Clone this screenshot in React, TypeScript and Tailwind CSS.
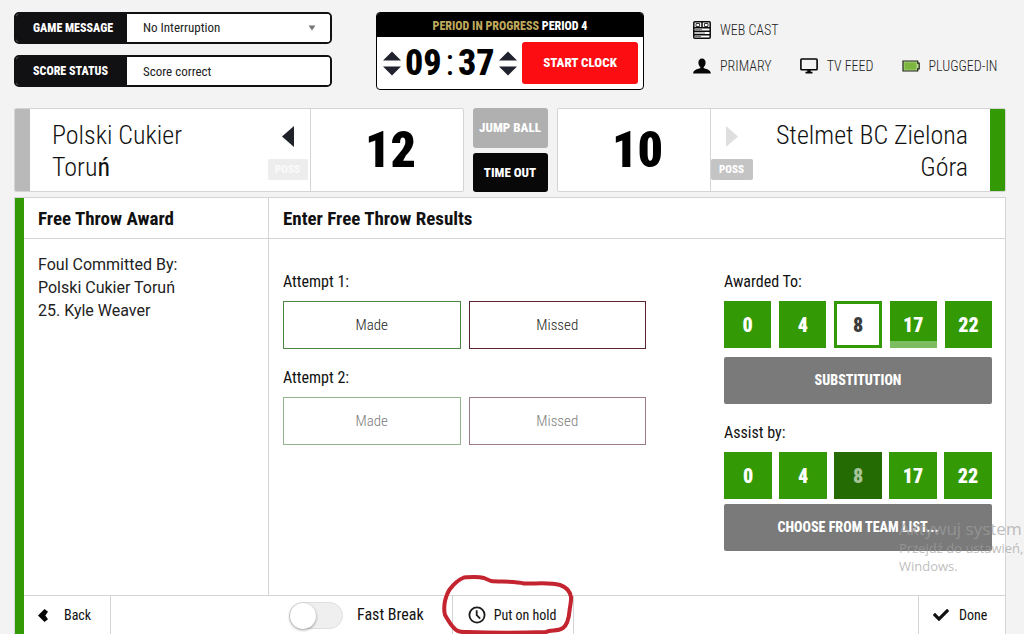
import { useState } from "react";
import type { ReactNode } from "react";
import { FaCheck } from "react-icons/fa";

const PLAYERS = ["0", "4", "8", "17", "22"];

function Field({ label, htmlFor, children }: { label: string; htmlFor: string; children: ReactNode }) {
  return (
    <div className="flex h-8 overflow-hidden rounded-[5px] border-2 border-[#111114] bg-white">
      <label
        htmlFor={htmlFor}
        className="flex w-[111px] shrink-0 items-center bg-[#111114] pl-[17px] text-[12px] font-extrabold whitespace-nowrap text-white"
      >
        {label}
      </label>
      <div className="relative flex flex-1 items-center">{children}</div>
    </div>
  );
}

function Stepper({ unit }: { unit: string }) {
  return (
    <div className="flex flex-col gap-[5px]">
      <button type="button" aria-label={`Add ${unit}`}>
        <svg width="18" height="10" viewBox="0 0 18 10" className="block">
          <path d="M9 0.5 18 9.5H0Z" fill="#20222e" />
        </svg>
      </button>
      <button type="button" aria-label={`Remove ${unit}`}>
        <svg width="18" height="10" viewBox="0 0 18 10" className="block">
          <path d="M0 0.5H18L9 9.5Z" fill="#20222e" />
        </svg>
      </button>
    </div>
  );
}

function Status({ icon, text }: { icon: ReactNode; text: string }) {
  return (
    <div className="flex items-center gap-[9px] text-[14px] leading-5 font-light whitespace-nowrap text-[#222]">
      {icon}
      <span>{text}</span>
    </div>
  );
}

function WebCastIcon() {
  return (
    <svg width="18" height="18" viewBox="0 0 18 18">
      <rect x="0.8" y="0.8" width="16.4" height="16.4" rx="1" fill="#fff" stroke="#0b0b0b" strokeWidth="1.5" />
      <path d="M0.5 6.8h17M0.5 10.3h17M0.5 13.8h17M9 1v5.5" stroke="#0b0b0b" strokeWidth="1.5" />
      <path d="M3 2.5h3.6v3H3zM11.4 2.5H15v3h-3.6z" fill="none" stroke="#333" strokeWidth="1" />
      <path d="M2 8.6h7M2 12h10M2 15.5h6" stroke="#555" strokeWidth="0.8" />
    </svg>
  );
}

function PersonIcon() {
  return (
    <svg width="18" height="16" viewBox="0 0 18 16">
      <path
        d="M9 0.5c2.3 0 3.6 1.7 3.6 4.1 0 1.9-.8 3.6-1.9 4.5v1.2c3.6.9 6.8 1.7 7.2 5.2H.1c.4-3.500 3.600-4.300 7.200-5.200V9.100C6.200 8.200 5.400 6.500 5.400 4.600 5.400 2.200 6.700.5 9 .5Z"
        fill="#060606"
      />
    </svg>
  );
}

function ScreenIcon() {
  return (
    <svg width="18" height="16" viewBox="0 0 18 16">
      <rect x="0.9" y="1" width="16.200" height="10.800" rx="0.800" fill="none" stroke="#060606" strokeWidth="1.600" />
      <path d="M7.300 12h3.400v1.800h1.800V15.500h-7v-1.700h1.800z" fill="#060606" />
    </svg>
  );
}

function BatteryIcon() {
  return (
    <svg width="18" height="12" viewBox="0 0 18 12">
      <path d="M1 1h14.700v2.200h1.500v5.600h-1.500V11H1Z" fill="#b5d791" stroke="#1c2416" strokeWidth="1.200" />
      <path d="M2.400 2.400h12v7.200h-12Z" fill="#7cb63f" />
    </svg>
  );
}

function Attempt({ title, dimmed }: { title: string; dimmed?: boolean }) {
  const shade = dimmed ? "opacity-60" : "";
  return (
    <fieldset disabled={dimmed}>
      <legend className="mb-2 text-[16px] leading-[22px] text-[#111]">{title}</legend>
      <div className={`grid grid-cols-2 gap-2 ${shade}`}>
        <button type="button" className="h-12 border border-[#4c8543] text-[15px] font-light text-[#222]">
          Made
        </button>
        <button type="button" className="h-12 border border-[#5b2530] text-[15px] font-light text-[#222]">
          Missed
        </button>
      </div>
    </fieldset>
  );
}

function TeamName({ children, align }: { children: ReactNode; align: string }) {
  return <h2 className={`flex-1 text-[26px] leading-8 font-light text-[#111] ${align}`}>{children}</h2>;
}

export default function App() {
  const [message, setMessage] = useState("No Interruption");
  const [score, setScore] = useState("Score correct");
  const [awarded, setAwarded] = useState("8");
  const [fastBreak, setFastBreak] = useState(false);

  return (
    <div className="relative flex min-h-screen flex-col overflow-hidden bg-[#f3f3f3] pr-[18px] pl-[14px] font-['Roboto_Condensed','Liberation_Sans_Narrow',Roboto,sans-serif] text-[#111]">
      <header className="grid grid-cols-[minmax(0,1fr)_268px_minmax(0,1fr)] pt-3">
        <div className="flex w-[318px] flex-col gap-[11px]">
          <Field label="GAME MESSAGE" htmlFor="message">
            <select
              id="message"
              value={message}
              onChange={(e) => setMessage(e.target.value)}
              className="h-full w-full appearance-none bg-white pl-4 text-[13px] text-[#222]"
            >
              <option>No Interruption</option>
              <option>Interruption</option>
            </select>
            <svg width="8" height="6" viewBox="0 0 8 6" className="pointer-events-none absolute right-[14px]">
              <path d="M0.500 0.500h7L4 5.500Z" fill="#777" />
            </svg>
          </Field>
          <Field label="SCORE STATUS" htmlFor="score">
            <input
              id="score"
              type="text"
              value={score}
              onChange={(e) => setScore(e.target.value)}
              className="h-full w-full bg-white pl-4 text-[13px] text-[#222]"
            />
          </Field>
        </div>

        <section className="h-[78px] overflow-hidden rounded-[4px] border border-black bg-white">
          <p className="h-6 bg-black text-center text-[12px] leading-[26px] font-extrabold text-white">
            <span className="text-[#bfa75c]">PERIOD IN PROGRESS</span> PERIOD 4
          </p>
          <div className="flex h-[52px] items-center justify-between pr-[5px] pl-[6px]">
            <div className="flex items-center gap-1">
              <Stepper unit="minute" />
              <div className="text-[36px] leading-10 font-extrabold text-black">
                09<span className="px-1 font-normal">:</span>37
              </div>
              <Stepper unit="second" />
            </div>
            <button
              type="button"
              className="h-[42px] w-[116px] rounded-[3px] bg-[#fb0d12] text-[13px] font-extrabold text-white"
            >
              START CLOCK
            </button>
          </div>
        </section>

        <div className="flex flex-col gap-4 pt-2 pl-[49px]">
          <Status icon={<WebCastIcon />} text="WEB CAST" />
          <div className="flex gap-7">
            <Status icon={<PersonIcon />} text="PRIMARY" />
            <Status icon={<ScreenIcon />} text="TV FEED" />
            <Status icon={<BatteryIcon />} text="PLUGGED-IN" />
          </div>
        </div>
      </header>

      <section className="mt-[18px] flex h-[84px] gap-[9px]">
        <div className="flex flex-1 overflow-hidden rounded-[2px] border border-[#d4d4d4] bg-white">
          <div className="w-[15px] bg-[#b9b9b9]" />
          <div className="flex flex-1 border-r border-[#d4d4d4] pt-[10px] pl-[22px]">
            <TeamName align="text-left">
              Polski Cukier
              <br />
              Toru<span className="font-normal">ń</span>
            </TeamName>
            <div className="flex flex-col items-center gap-3 pt-[7px] pr-[2px]">
              <svg width="12" height="21" viewBox="0 0 12 21">
                <path d="M12 0v21L0 10.500Z" fill="#20222a" />
              </svg>
              <span className="h-[21px] w-10 rounded-[2px] bg-[#ededed] text-center text-[11px] leading-[21px] font-extrabold text-[#fafafa]">
                POSS
              </span>
            </div>
          </div>
          <div className="flex w-[152px] items-center justify-center pl-2 text-[50px] leading-none font-black text-black">
            12
          </div>
        </div>

        <div className="flex w-[75px] flex-col gap-[5px] text-[13px] font-extrabold text-white">
          <button type="button" className="flex-1 rounded-[3px] bg-[#b0b0b0] whitespace-nowrap">
            JUMP BALL
          </button>
          <button type="button" className="flex-1 rounded-[3px] bg-[#080808]">
            TIME OUT
          </button>
        </div>

        <div className="flex flex-1 overflow-hidden rounded-[2px] border border-[#d4d4d4] bg-white">
          <div className="flex w-[152px] items-center justify-center pl-2 text-[50px] leading-none font-black text-black">
            10
          </div>
          <div className="flex flex-1 border-l border-[#d4d4d4] pt-[10px] pr-[22px]">
            <div className="flex flex-col items-center gap-3 pt-[7px]">
              <svg width="12" height="21" viewBox="0 0 12 21">
                <path d="M0 0v21L12 10.500Z" fill="#dedede" />
              </svg>
              <span className="h-[21px] w-[42px] rounded-[2px] bg-[#c4c4c4] text-center text-[11px] leading-[21px] font-extrabold text-white">
                POSS
              </span>
            </div>
            <TeamName align="text-right">
              Stelmet BC Zielona
              <br />
              Góra
            </TeamName>
          </div>
          <div className="w-[15px] bg-[#339a05]" />
        </div>
      </section>

      <main className="mt-[5px] flex flex-1 border-t border-r border-l border-[#d4d4d4] bg-white">
        <div className="w-[9px] shrink-0 bg-[#339a05]" />
        <div className="flex flex-1 flex-col">
          <div className="flex flex-1">
            <aside className="w-[245px] border-r border-[#d4d4d4]">
              <h3 className="h-[41px] border-b border-[#d4d4d4] pl-[14px] text-[19px] leading-[42px] font-bold">
                Free Throw Award
              </h3>
              <p className="pt-[14px] pl-[14px] font-[Roboto,sans-serif] text-[16px] leading-[23px] text-[#222]">
                Foul Committed By:
                <br />
                Polski Cukier Toruń
                <br />
                25. Kyle Weaver
              </p>
            </aside>
            <div className="flex-1">
              <h3 className="h-[41px] border-b border-[#d4d4d4] pl-[14px] text-[19px] leading-[42px] font-bold">
                Enter Free Throw Results
              </h3>
              <div className="flex justify-between pt-8 pr-[13px] pb-6 pl-[14px]">
                <div className="flex w-[363px] flex-col gap-[18px]">
                  <Attempt title="Attempt 1:" />
                  <Attempt title="Attempt 2:" dimmed />
                </div>
                <div className="w-[268px]">
                  <h4 className="mb-2 text-[16px] leading-[22px]">Awarded To:</h4>
                  <div className="grid grid-cols-5 gap-2">
                    {PLAYERS.map((n) => (
                      <button
                        key={n}
                        type="button"
                        aria-pressed={n === awarded}
                        onClick={() => setAwarded(n)}
                        className={`relative h-[47px] text-[20px] font-black ${
                          n === awarded
                            ? "border-[3px] border-[#339a05] bg-white text-[#3b3b3b]"
                            : "bg-[#339a05] text-white"
                        }`}
                      >
                        {n}
                        {n === "17" && <span className="absolute inset-x-0 bottom-0 h-[7px] bg-[#7dbd62]" />}
                      </button>
                    ))}
                  </div>
                  <button
                    type="button"
                    className="mt-[9px] h-[47px] w-full rounded-[2px] bg-[#7a7a7a] text-[14px] font-extrabold text-white"
                  >
                    SUBSTITUTION
                  </button>
                  <h4 className="mt-[18px] mb-2 text-[16px] leading-[22px]">Assist by:</h4>
                  <div className="grid grid-cols-5 gap-[7px]">
                    {PLAYERS.map((n) => (
                      <button
                        key={n}
                        type="button"
                        disabled={n === awarded}
                        className={`h-[47px] text-[20px] font-black ${
                          n === awarded ? "bg-[#246b03] text-[#a7c49b]" : "bg-[#339a05] text-white"
                        }`}
                      >
                        {n}
                      </button>
                    ))}
                  </div>
                  <button
                    type="button"
                    className="mt-[5px] h-[47px] w-full rounded-[2px] bg-[#7a7a7a] text-[14px] font-extrabold text-white"
                  >
                    CHOOSE FROM TEAM LIST...
                  </button>
                </div>
              </div>
            </div>
          </div>

          <footer className="flex h-[39px] border-t border-[#d4d4d4] text-[14px]">
            <div className="flex w-[245px]">
              <button type="button" className="flex w-[87px] items-center gap-4 border-r border-[#d4d4d4] pl-[14px]">
                <svg width="10" height="13" viewBox="0 0 10 13">
                  <path d="M6.500 0 10 2.800 7.300 6.500 10 10.200 6.500 13 0 6.500Z" fill="#060606" />
                </svg>
                Back
              </button>
            </div>
            <label className="flex items-center gap-[14px] pl-5 text-[16px] whitespace-nowrap">
              <input
                type="checkbox"
                role="switch"
                checked={fastBreak}
                onChange={(e) => setFastBreak(e.target.checked)}
                className="h-[27px] w-[54px] appearance-none rounded-full border border-[#dedede] bg-[#efefef] before:block before:size-[26px] before:rounded-full before:bg-white before:shadow-[0_1px_3px_rgba(0,0,0,0.4)] checked:bg-[#339a05] checked:before:ml-[26px]"
              />
              Fast Break
            </label>
            <div className="relative ml-7 flex border-x border-[#d4d4d4]">
              <button type="button" className="flex w-[120px] items-center gap-2 pl-[15px] whitespace-nowrap">
                <svg width="18" height="18" viewBox="0 0 18 18" fill="none" stroke="#1c1c1c" strokeWidth="1.800">
                  <circle cx="9" cy="9" r="7.600" />
                  <path d="M8.700 4.200v5l3.500 3.500" />
                </svg>
                Put on hold
              </button>
              <svg
                width="140"
                height="61"
                viewBox="440 574 140 61"
                className="pointer-events-none absolute -top-[22px] -left-[14px]"
                fill="none"
                stroke="#c4242f"
                strokeWidth="4"
                strokeLinecap="round"
                strokeLinejoin="round"
              >
                <path d="M485 578C478 576 471 577 465 577.500C459 580 454 585 451 589C448 593 447 597 446 601C445 606 445 611 446 615C449 620 451 624 455 628C458 632 462 632.500 468 632C495 633 520 633 547 632C552 629 558 632 564 628C569 624 570 617 570.500 611C571 606 572.500 601 572 597C571 591 567 587 561 585C550 582 536 584 525 583.500C515 581 500 582 492 581Z" />
              </svg>
            </div>
            <button type="button" className="ml-auto flex w-[87px] items-center gap-[10px] border-l border-[#d4d4d4] pl-[14px]">
              <FaCheck size={16} />
              Done
            </button>
          </footer>
        </div>
      </main>

      <div className="pointer-events-none absolute top-[518px] right-0 w-[125px] overflow-hidden font-['Open_Sans',sans-serif] whitespace-nowrap text-[#a0a0a0]/70">
        <p className="text-[17px] leading-[21px]">Aktywuj system</p>
        <p className="text-[13px] leading-[18px]">
          Przejdź do ustawień,
          <br />
          Windows.
        </p>
      </div>
    </div>
  );
}
